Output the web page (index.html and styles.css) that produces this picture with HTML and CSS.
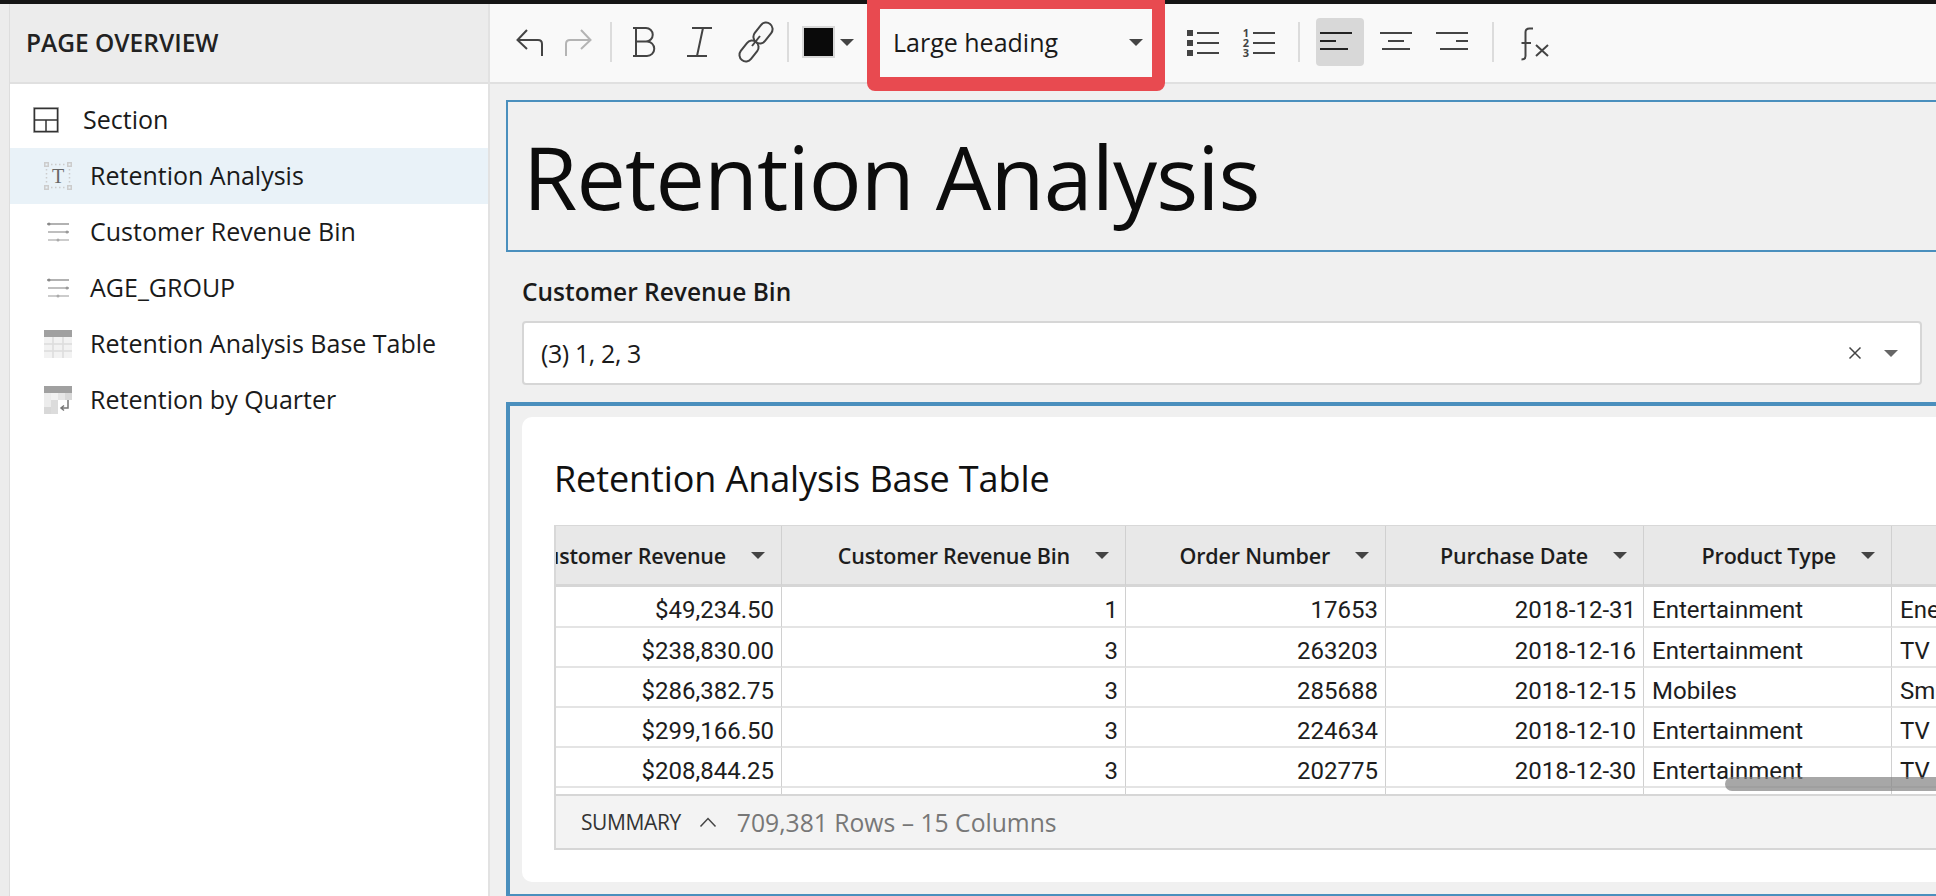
FILE: index.html
```html
<!DOCTYPE html>
<html lang="en">
<head>
    <meta charset="UTF-8">
    <title>Retention Analysis</title>
    <link rel="stylesheet" href="styles.css">
</head>
<body>
    <div class="topbar"></div>

    <div class="app">
        <aside class="sidebar">
            <h2 class="side-head">PAGE OVERVIEW</h2>
            <ul class="side-list">
                <li class="side-row section-row">
                    <svg class="side-icon-sm" width="26" height="26" viewBox="0 0 26 26" fill="none">
                        <rect x=".5" y=".5" width="25" height="25" stroke="#bbb"/>
                        <rect x="1.5" y="1.5" width="23" height="23" stroke="#333" stroke-width="1.5"/>
                        <path d="M2 13H24M13 13V24" stroke="#333" stroke-width="1.5"/>
                    </svg>
                    <span>Section</span>
                </li>
                <li class="side-row active">
                    <svg class="side-icon" width="28" height="28" viewBox="0 0 28 28" fill="none">
                        <g stroke="#ccc" stroke-width="1.5">
                            <rect x=".75" y=".75" width="3.5" height="3.5"/>
                            <rect x="23.75" y=".75" width="3.5" height="3.5"/>
                            <rect x=".75" y="23.75" width="3.5" height="3.5"/>
                            <rect x="23.75" y="23.75" width="3.5" height="3.5"/>
                            <path d="M7 2.5H22M7 25.5H22M2.5 7V22M25.500 7V22" stroke-dasharray="1.500 2.500"/>
                        </g>
                        <text x="14" y="21" text-anchor="middle" class="t-glyph">T</text>
                    </svg>
                    <span>Retention Analysis</span>
                </li>
                <li class="side-row">
                    <svg class="side-icon" width="28" height="28" viewBox="0 0 28 28" fill="none">
                        <path d="M3 6H25" stroke="#999" stroke-width="1.500"/><circle cx="5" cy="6" r="1.500" fill="#888"/>
                        <path d="M4 14H25" stroke="#aaa" stroke-width="1.500"/><circle cx="23" cy="14" r="1.500" fill="#999"/>
                        <path d="M4 22H25" stroke="#bbb" stroke-width="1.500"/><circle cx="14" cy="22" r="1.500" fill="#aaa"/>
                    </svg>
                    <span>Customer Revenue Bin</span>
                </li>
                <li class="side-row">
                    <svg class="side-icon" width="28" height="28" viewBox="0 0 28 28" fill="none">
                        <path d="M3 6H25" stroke="#999" stroke-width="1.500"/><circle cx="5" cy="6" r="1.500" fill="#888"/>
                        <path d="M4 14H25" stroke="#aaa" stroke-width="1.500"/><circle cx="23" cy="14" r="1.500" fill="#999"/>
                        <path d="M4 22H25" stroke="#bbb" stroke-width="1.500"/><circle cx="14" cy="22" r="1.500" fill="#aaa"/>
                    </svg>
                    <span>AGE_GROUP</span>
                </li>
                <li class="side-row">
                    <svg class="side-icon" width="28" height="28" viewBox="0 0 28 28" fill="none">
                        <rect width="28" height="28" fill="#f2f2f2"/>
                        <rect width="28" height="7" fill="#a0a0a0"/>
                        <path d="M0 14H28M0 21H28M9 7V28M19 7V28" stroke="#dcdcdc" stroke-width="1.500"/>
                    </svg>
                    <span>Retention Analysis Base Table</span>
                </li>
                <li class="side-row">
                    <svg class="side-icon" width="28" height="28" viewBox="0 0 28 28" fill="none">
                        <rect width="28" height="7" fill="#a0a0a0"/>
                        <rect y="7" width="7" height="21" fill="#ececec"/>
                        <rect x="7" y="7" width="7" height="7" fill="#f2f2f2"/>
                        <rect x="14" y="7" width="7" height="7" fill="#e6e6e6"/>
                        <rect x="21" y="7" width="7" height="7" fill="#d8d8d8"/>
                        <rect x="7" y="14" width="7" height="14" fill="#dcdcdc"/>
                        <rect y="21" width="7" height="7" fill="#d8d8d8"/>
                        <path d="M24 14V22H17M20 19.500L17 22L20 24.500" stroke="#777" stroke-width="1.500"/>
                    </svg>
                    <span>Retention by Quarter</span>
                </li>
            </ul>
        </aside>

        <main class="workspace">
            <div class="toolbar">
                <button class="tb-btn">
                    <svg width="48" height="48" viewBox="0 0 48 48" fill="none" stroke="#444" stroke-width="2">
                        <path d="M21 12L11.500 22L21 31M12 22H32Q36 22 36 26V38"/>
                    </svg>
                </button>
                <button class="tb-btn">
                    <svg width="48" height="48" viewBox="0 0 48 48" fill="none" stroke="#b4b4b4" stroke-width="2">
                        <path d="M27 12L36.500 22L27 31M36 22H16Q12 22 12 26V38"/>
                    </svg>
                </button>
                <span class="tb-sep sep-a"></span>
                <button class="tb-btn">
                    <svg width="48" height="48" viewBox="0 0 48 48" fill="none" stroke="#444" stroke-width="2">
                        <path d="M13 10H26A6.750 6.750 0 0 1 26 23.500H16M16 10V38M16 23.500H27A7.250 7.250 0 0 1 27 38H13"/>
                    </svg>
                </button>
                <button class="tb-btn gap-l">
                    <svg width="48" height="48" viewBox="0 0 48 48" fill="none" stroke="#444" stroke-width="2">
                        <path d="M16 10H36M11 38H31M27 10L21 38"/>
                    </svg>
                </button>
                <button class="tb-btn gap-l">
                    <svg width="48" height="48" viewBox="0 0 48 48" fill="none" stroke="#444" stroke-width="2">
                        <rect x="19.500" y="8.500" width="23" height="13" rx="6.500" transform="rotate(-52 31 15)"/>
                        <rect x="5.500" y="26.500" width="23" height="13" rx="6.500" transform="rotate(-52 17 33)"/>
                        <path d="M20 28L28 18"/>
                    </svg>
                </button>
                <span class="tb-sep sep-b"></span>
                <span class="swatch"></span>
                <span class="caret swatch-caret"></span>
                <div class="type-select">
                    <span>Large heading</span>
                    <span class="caret"></span>
                </div>
                <button class="tb-btn list-first">
                    <svg width="48" height="48" viewBox="0 0 48 48" fill="#444">
                        <rect x="8" y="12" width="6" height="6"/><rect x="8" y="22" width="6" height="6"/><rect x="8" y="32" width="6" height="6"/>
                        <rect x="18" y="14" width="22" height="2"/><rect x="18" y="24" width="22" height="2"/><rect x="18" y="34" width="22" height="2"/>
                    </svg>
                </button>
                <button class="tb-btn gap-l">
                    <svg width="48" height="48" viewBox="0 0 48 48" fill="#444">
                        <text x="11" y="19" class="num-glyph">1</text><text x="11" y="29" class="num-glyph">2</text><text x="11" y="39" class="num-glyph">3</text>
                        <rect x="18" y="14" width="22" height="2"/><rect x="18" y="24" width="22" height="2"/><rect x="18" y="34" width="22" height="2"/>
                    </svg>
                </button>
                <span class="tb-sep sep-c"></span>
                <button class="tb-btn on">
                    <svg width="48" height="48" viewBox="0 0 48 48" fill="#222">
                        <rect x="4" y="14" width="32" height="2"/><rect x="4" y="22" width="16" height="2"/><rect x="4" y="30" width="28" height="2"/>
                    </svg>
                </button>
                <button class="tb-btn gap-l">
                    <svg width="48" height="48" viewBox="0 0 48 48" fill="#444">
                        <rect x="8" y="14" width="32" height="2"/><rect x="16" y="22" width="16" height="2"/><rect x="10" y="30" width="28" height="2"/>
                    </svg>
                </button>
                <button class="tb-btn gap-l">
                    <svg width="48" height="48" viewBox="0 0 48 48" fill="#444">
                        <rect x="8" y="14" width="32" height="2"/><rect x="28" y="22" width="12" height="2"/><rect x="12" y="30" width="28" height="2"/>
                    </svg>
                </button>
                <span class="tb-sep sep-d"></span>
                <button class="tb-btn fx-btn">
                    <svg width="48" height="48" viewBox="0 0 48 48" fill="none" stroke="#444" stroke-width="2">
                        <path d="M23 10.500H19.500Q15.500 10.500 15.500 14V38Q15.500 41.500 11.500 41.500M11.500 25H21M26 27L38 38M38 27L26 38"/>
                    </svg>
                </button>
            </div>

            <div class="canvas">
                <div class="title-box">
                    <h1>Retention Analysis</h1>
                </div>

                <div class="filter">
                    <label class="filter-label">Customer Revenue Bin</label>
                    <div class="filter-input">
                        <span class="filter-value">(3) 1, 2, 3</span>
                        <svg width="14" height="14" viewBox="0 0 14 14" fill="none" stroke="#444" stroke-width="1.500">
                            <path d="M1.500 1.500L12.500 12.500M12.500 1.500L1.500 12.500"/>
                        </svg>
                        <span class="caret filter-caret"></span>
                    </div>
                </div>

                <section class="section-box">
                    <div class="card">
                        <h3 class="card-title">Retention Analysis Base Table</h3>
                        <div class="table-wrap">
                            <table class="grid">
                                <colgroup>
                                    <col class="c1"><col class="c2"><col class="c3"><col class="c4"><col class="c5"><col class="c6">
                                </colgroup>
                                <thead>
                                    <tr>
                                        <th><div class="th-in">Customer Revenue<span class="caret"></span></div></th>
                                        <th><div class="th-in">Customer Revenue Bin<span class="caret"></span></div></th>
                                        <th><div class="th-in">Order Number<span class="caret"></span></div></th>
                                        <th><div class="th-in">Purchase Date<span class="caret"></span></div></th>
                                        <th><div class="th-in">Product Type<span class="caret"></span></div></th>
                                        <th></th>
                                    </tr>
                                </thead>
                                <tbody>
                                    <tr><td>$49,234.50</td><td>1</td><td>17653</td><td>2018-12-31</td><td class="txt">Entertainment</td><td class="txt">Energy</td></tr>
                                    <tr><td>$238,830.00</td><td>3</td><td>263203</td><td>2018-12-16</td><td class="txt">Entertainment</td><td class="txt">TV</td></tr>
                                    <tr><td>$286,382.75</td><td>3</td><td>285688</td><td>2018-12-15</td><td class="txt">Mobiles</td><td class="txt">Smart</td></tr>
                                    <tr><td>$299,166.50</td><td>3</td><td>224634</td><td>2018-12-10</td><td class="txt">Entertainment</td><td class="txt">TV</td></tr>
                                    <tr><td>$208,844.25</td><td>3</td><td>202775</td><td>2018-12-30</td><td class="txt">Entertainment</td><td class="txt">TV</td></tr>
                                    <tr><td></td><td></td><td></td><td></td><td></td><td></td></tr>
                                </tbody>
                            </table>
                            <div class="h-scroll"></div>
                        </div>
                        <div class="summary">
                            <span class="sum-label">SUMMARY</span>
                            <svg width="18" height="12" viewBox="0 0 18 12" fill="none" stroke="#444" stroke-width="1.500">
                                <path d="M1.500 10.500L9 2.500L16.500 10.500"/>
                            </svg>
                            <span class="sum-count">709,381 Rows – 15 Columns</span>
                        </div>
                    </div>
                </section>
            </div>
        </main>
    </div>

    <!-- red annotation drawn on top of the screenshot -->
    <div class="callout"></div>
</body>
</html>
```

FILE: styles.css
```css
* {
    box-sizing: border-box;
    margin: 0;
    padding: 0;
}
html, body {
    height: 100%;
    overflow: hidden;
}
body {
    font-family: "Open Sans", "Noto Sans", sans-serif;
    color: #1a1a1a;
    background: #ececec;
    display: flex;
    flex-direction: column;
}
.topbar {
    height: 4px;
    background: #151515;
    flex: none;
}
.app {
    flex: 1;
    display: flex;
    padding-left: 9px;
    min-height: 0;
}

/* Sidebar */
.sidebar {
    width: 481px;
    flex: none;
    background: #fff;
    border-left: 1px solid #ddd;
    border-right: 2px solid #e2e2e2;
}
.side-head {
    height: 80px;
    padding: 0 0 2px 16px;
    display: flex;
    align-items: center;
    font-size: 24.5px;
    font-weight: 600;
    color: #222;
    background: #ececec;
    border-bottom: 2px solid #e0e0e0;
}
.side-list {
    list-style: none;
    padding-top: 8px;
}
.side-row {
    height: 56px;
    display: flex;
    align-items: center;
    padding-left: 34px;
    font-size: 25px;
}
.side-row span {
    padding-bottom: 2px;
}
.side-row.active {
    background: #e9f2f8;
}
.section-row {
    padding-left: 23px;
}
.side-icon {
    margin-right: 18px;
    flex: none;
}
.side-icon-sm {
    margin-right: 24px;
    flex: none;
}
.t-glyph {
    font-family: "Liberation Serif", serif;
    font-size: 20px;
    fill: #666;
}

/* Toolbar */
.workspace {
    flex: 1;
    min-width: 0;
    display: flex;
    flex-direction: column;
    background: #f0f0f0;
}
.toolbar {
    height: 80px;
    flex: none;
    display: flex;
    align-items: center;
    padding: 0 0 2px 16px;
    background: #f9f9f9;
    border-bottom: 2px solid #e0e0e0;
}
.tb-btn {
    width: 48px;
    height: 48px;
    flex: none;
    border: none;
    border-radius: 4px;
    background: none;
    display: block;
}
.tb-btn svg {
    display: block;
}
.tb-btn.on {
    background: #d8d8d8;
    margin-left: 16px;
}
.gap-l { margin-left: 8px; }
.list-first { margin-left: 26px; }
.fx-btn { margin-left: 16px; }
.tb-sep {
    width: 2px;
    height: 40px;
    flex: none;
    background: #dcdcdc;
}
.sep-a { margin: 0 8px; }
.sep-b { margin-left: 7px; }
.sep-c { margin-left: 15px; }
.sep-d { margin-left: 16px; }
.swatch {
    width: 33px;
    height: 32px;
    margin-left: 13px;
    flex: none;
    background: #0a0a0a;
    border: 2px solid #d8d8d8;
}
.caret {
    width: 0;
    height: 0;
    flex: none;
    border-left: 7px solid transparent;
    border-right: 7px solid transparent;
    border-top: 7px solid #444;
}
.swatch-caret { margin-left: 5px; }
.type-select {
    width: 272px;
    height: 68px;
    margin-left: 27px;
    flex: none;
    padding: 0 10px 0 12px;
    display: flex;
    align-items: center;
    justify-content: space-between;
    font-size: 25px;
}
.num-glyph {
    font-family: "Open Sans", sans-serif;
    font-size: 11px;
    font-weight: 700;
    text-anchor: middle;
}
.callout {
    position: absolute;
    left: 867px;
    top: 0;
    width: 298px;
    height: 91px;
    border: 13px solid #e84a50;
    border-top-width: 9px;
    border-bottom-width: 14px;
    border-radius: 0 0 8px 8px;
}

/* Canvas */
.canvas {
    flex: 1;
    min-height: 0;
    overflow: hidden;
    padding: 16px 0 0 16px;
}
.title-box {
    width: 1500px;
    height: 152px;
    padding-left: 15px;
    display: flex;
    align-items: center;
    border: 2px solid #4a8fbd;
}
h1 {
    font-size: 88px;
    font-weight: 400;
    letter-spacing: -0.9px;
    color: #0c0c0c;
}
.filter {
    padding-left: 16px;
}
.filter-label {
    display: block;
    height: 32px;
    margin-top: 24px;
    line-height: 32px;
    font-size: 24.500px;
    font-weight: 600;
}
.filter-input {
    width: 1400px;
    height: 64px;
    margin-top: 13px;
    padding: 0 22px 0 17px;
    display: flex;
    align-items: center;
    background: #fff;
    border: 2px solid #d6d6d6;
    border-radius: 4px;
    font-size: 25px;
}
.filter-value {
    flex: 1;
    letter-spacing: -0.4px;
}
.filter-caret {
    margin-left: 22px;
    border-top-color: #666;
}
.section-box {
    width: 1500px;
    height: 496px;
    margin-top: 17px;
    padding: 11px 12px 12px;
    border: 4px solid #4a8fbd;
}
.card {
    height: 465px;
    padding: 40px 0 0 32px;
    background: #fff;
    border-radius: 10px;
}
.card-title {
    height: 44px;
    margin: 0 0 24px 0;
    line-height: 44px;
    font-size: 36px;
    font-weight: 400;
    letter-spacing: -0.1px;
    color: #111;
}

/* Table */
.table-wrap {
    position: relative;
    width: 1400px;
    height: 269px;
    overflow: hidden;
    border-left: 2px solid #d8d8d8;
    border-top: 1px solid #d8d8d8;
}
.grid {
    width: 1595px;
    margin-left: -58px;
    table-layout: fixed;
    border-collapse: separate;
    border-spacing: 0;
    font-family: Roboto, sans-serif;
    font-size: 24px;
    color: #1d1d1d;
}
.c1 { width: 284px; }
.c2 { width: 344px; }
.c3 { width: 260px; }
.c4 { width: 258px; }
.c5 { width: 248px; }
th {
    height: 61px;
    padding: 0 16px 0 0;
    background: #e8e8e8;
    border-right: 1px solid #d0d0d0;
    border-bottom: 3px solid #d6d6d6;
    font-family: "Open Sans", sans-serif;
    font-size: 21.5px;
    font-weight: 600;
    letter-spacing: -0.2px;
}
.th-in {
    display: flex;
    align-items: center;
    justify-content: flex-end;
    gap: 25px;
    white-space: nowrap;
}
td {
    height: 40px;
    padding: 7px 7px 0 0;
    line-height: 28px;
    text-align: right;
    white-space: nowrap;
    overflow: hidden;
    border-right: 1px solid #d0d0d0;
    border-bottom: 2px solid #e4e4e4;
}
tbody tr:first-child td {
    height: 41px;
}
td.txt {
    padding: 7px 0 0 8px;
    text-align: left;
}
.h-scroll {
    position: absolute;
    left: 1169px;
    top: 251px;
    width: 400px;
    height: 14px;
    border-radius: 7px;
    background: rgba(130, 130, 130, 0.7);
}

/* Summary bar */
.summary {
    width: 1400px;
    height: 56px;
    display: flex;
    align-items: center;
    padding-left: 25px;
    background: #f3f3f3;
    border-left: 2px solid #d8d8d8;
    border-top: 2px solid #d6d6d6;
    border-bottom: 2px solid #d6d6d6;
}
.sum-label {
    font-size: 21px;
    letter-spacing: -0.4px;
    color: #333;
}
.summary svg {
    margin-left: 18px;
}
.sum-count {
    margin-left: 20px;
    font-size: 24.700px;
    color: #777;
}
```
